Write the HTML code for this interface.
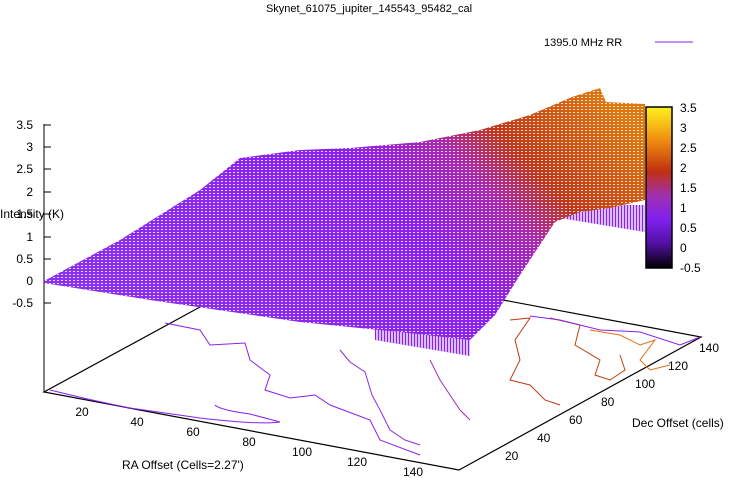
<!DOCTYPE html>
<html><head><style>
html,body{margin:0;padding:0;background:#fff;}
svg{display:block;font-family:"Liberation Sans",sans-serif;font-size:12px;}
</style></head><body>
<svg width="738" height="478" viewBox="0 0 738 478">
<defs>
<linearGradient id="sg" x1="0" y1="0.6" x2="1" y2="0.2">
<stop offset="0" stop-color="#8a30f0"/>
<stop offset="0.55" stop-color="#8a20f0"/>
<stop offset="0.7" stop-color="#a828b0"/>
<stop offset="0.8" stop-color="#c03818"/>
<stop offset="1" stop-color="#e07810"/>
</linearGradient>
<linearGradient id="cb" x1="0" y1="0" x2="0" y2="1">
<stop offset="0" stop-color="#fff020"/>
<stop offset="0.2" stop-color="#f09010"/>
<stop offset="0.4" stop-color="#c03010"/>
<stop offset="0.55" stop-color="#a030b0"/>
<stop offset="0.7" stop-color="#8020f0"/>
<stop offset="0.85" stop-color="#5010a0"/>
<stop offset="1" stop-color="#000"/>
</linearGradient>
<pattern id="mesh" width="4" height="3" patternUnits="userSpaceOnUse">
<rect x="1" y="1" width="2" height="1" fill="#fff" opacity="0.8"/>
</pattern>
<pattern id="vl" width="3" height="4" patternUnits="userSpaceOnUse">
<rect x="1" y="0" width="2" height="4" fill="#fff" opacity="0.7"/>
</pattern>
</defs>
<text x="369" y="12" text-anchor="middle" font-size="11">Skynet_61075_jupiter_145543_95482_cal</text>
<text x="544" y="46" font-size="11">1395.0 MHz RR</text>
<line x1="655" y1="42" x2="693" y2="42" stroke="#8a20f0" stroke-width="1"/>
<line x1="44" y1="124" x2="44" y2="392" stroke="#000"/>
<g stroke="#000">
<line x1="44" y1="125" x2="51" y2="125"/><line x1="44" y1="147" x2="51" y2="147"/><line x1="44" y1="169" x2="51" y2="169"/><line x1="44" y1="192" x2="51" y2="192"/><line x1="44" y1="214" x2="51" y2="214"/><line x1="44" y1="237" x2="51" y2="237"/><line x1="44" y1="259" x2="51" y2="259"/><line x1="44" y1="281" x2="51" y2="281"/><line x1="44" y1="303" x2="51" y2="303"/>
</g>
<g text-anchor="end">
<text x="33" y="129">3.5</text><text x="33" y="151">3</text><text x="33" y="173">2.5</text><text x="33" y="196">2</text><text x="33" y="218">1.5</text><text x="33" y="241">1</text><text x="33" y="263">0.5</text><text x="33" y="285">0</text><text x="33" y="307">-0.5</text>
</g>
<text x="0" y="218">Intensity (K)</text>
<polyline points="200,307 44,392 459,470 701,337 503,300" fill="none" stroke="#000" stroke-width="1.2"/>
<g fill="none" stroke-width="1">
<path d="M50,390 Q90,400 130,408 L200,418 Q260,425 280,422 L250,414 Q220,410 215,405" stroke="#8a20f0"/>
<path d="M165,323 L200,330 L210,345 L245,343 L250,360 L270,375 L265,390 L290,398 L315,395 L330,405 L370,420 L380,440 L420,455" stroke="#8a20f0"/>
<path d="M340,350 L350,362 L365,372 L372,395 L380,410 L390,430 L405,440 L420,445" stroke="#9030e0"/>
<path d="M430,360 L440,380 L450,395 L460,410 L470,420" stroke="#a030c0"/>
<path d="M510,320 L530,318 L515,340 L520,360 L510,380 L530,385 L545,400 L560,405" stroke="#c03818"/>
<path d="M550,318 L580,325 L575,345 L600,360 L595,375 L610,380 L625,370 L620,355" stroke="#c04010"/>
<path d="M590,330 L620,335 L640,345 L655,340 L640,360 L650,370 L670,365" stroke="#e07010"/>
<path d="M530,316 L560,320 L600,330 L640,332 L680,345 L700,337" stroke="#8a20f0"/>
</g>
<path d="M375,300 L470,318 L470,356 L375,340 Z" fill="#8a20f0"/>
<path d="M375,300 L470,318 L470,356 L375,340 Z" fill="url(#vl)"/>
<path d="M560,205 L645,205 L645,232 L560,218 Z" fill="#8a20f0"/>
<path d="M560,205 L645,205 L645,232 L560,218 Z" fill="url(#vl)"/>
<path d="M44,281 L120,240 L200,190 L240,158 L300,150 L350,148 L420,142 L480,130 L530,115 L572,97 L600,88 L606,102 L645,104 L645,200 L610,208 L580,212 L555,222 L520,275 L495,315 L470,340 L400,332 L300,322 L150,300 L44,283 Z" fill="url(#sg)"/>
<path d="M44,281 L120,240 L200,190 L240,158 L300,150 L350,148 L420,142 L480,130 L530,115 L572,97 L600,88 L606,102 L645,104 L645,200 L610,208 L580,212 L555,222 L520,275 L495,315 L470,340 L400,332 L300,322 L150,300 L44,283 Z" fill="url(#mesh)"/>
<rect x="646" y="107" width="26" height="161" fill="url(#cb)" stroke="#000" stroke-width="1.5"/>
<g font-size="12">
<text x="680" y="112">3.5</text><text x="680" y="132">3</text><text x="680" y="152">2.5</text><text x="680" y="172">2</text><text x="680" y="192">1.5</text><text x="680" y="212">1</text><text x="680" y="232">0.5</text><text x="680" y="252">0</text><text x="680" y="272">-0.5</text>
</g>
<g text-anchor="middle">
<text x="82" y="416">20</text><text x="137" y="426">40</text><text x="193" y="436">60</text><text x="249" y="446">80</text><text x="302" y="456">100</text><text x="357" y="466">120</text><text x="413" y="476">140</text>
</g>
<text x="122" y="469">RA Offset (Cells=2.27')</text>
<g>
<text x="505" y="460">20</text><text x="537" y="442">40</text><text x="569" y="424">60</text><text x="601" y="406">80</text><text x="635" y="388">100</text><text x="668" y="370">120</text><text x="699" y="352">140</text>
</g>
<text x="632" y="427">Dec Offset (cells)</text>
</svg>
</body></html>
